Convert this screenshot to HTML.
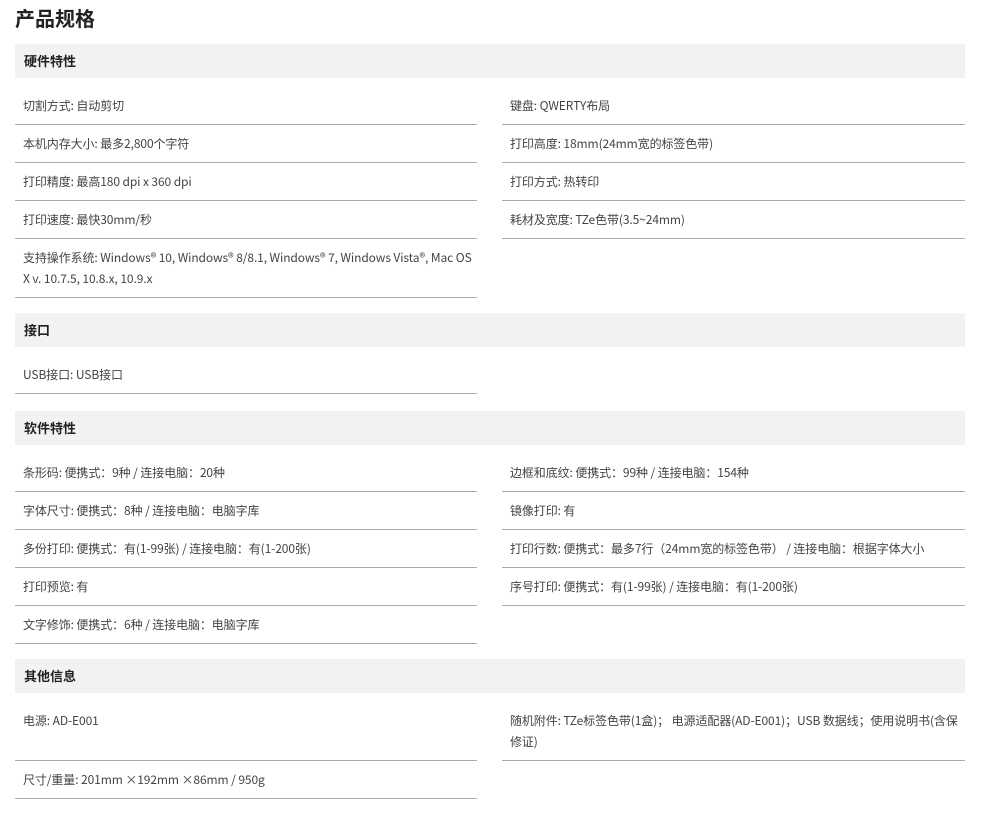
<!DOCTYPE html>
<html><head><meta charset="utf-8"><style>
*{margin:0;padding:0;box-sizing:border-box}
body{width:990px;height:816px;background:#fff;font-family:"Noto Sans CJK SC","Liberation Sans",sans-serif;color:#333;overflow:hidden}
h1{position:absolute;left:15px;top:3px;font-size:20px;font-weight:bold;color:#222;line-height:30px}
.sec{position:absolute;left:15px;width:950px}
.hd{height:34px;background:#f2f2f2;font-size:13px;font-weight:bold;line-height:34px;padding-left:9px;color:#222}
.grid{display:grid;grid-template-columns:462px 463px;column-gap:25px;margin-top:9px}
.c{font-size:12px;line-height:21px;padding:8px 0 8px 8px;border-bottom:1px solid #aaa;color:#444;letter-spacing:-0.1px}
.e{border-bottom:none}
</style></head><body>
<h1>产品规格</h1>
<div class="sec" style="top:44px">
<div class="hd">硬件特性</div>
<div class="grid">
<div class="c">切割方式: 自动剪切</div><div class="c">键盘: QWERTY布局</div>
<div class="c">本机内存大小: 最多2,800个字符</div><div class="c">打印高度: 18mm(24mm宽的标签色带)</div>
<div class="c">打印精度: 最高180 dpi x 360 dpi</div><div class="c">打印方式: 热转印</div>
<div class="c">打印速度: 最快30mm/秒</div><div class="c">耗材及宽度: TZe色带(3.5~24mm)</div>
<div class="c">支持操作系统: Windows® 10, Windows® 8/8.1, Windows® 7, Windows Vista®, Mac OS X v. 10.7.5, 10.8.x, 10.9.x</div><div class="c e"></div>
</div></div>
<div class="sec" style="top:313px">
<div class="hd">接口</div>
<div class="grid"><div class="c">USB接口: USB接口</div><div class="c e"></div></div>
</div>
<div class="sec" style="top:411px">
<div class="hd">软件特性</div>
<div class="grid">
<div class="c">条形码: 便携式：9种 / 连接电脑：20种</div><div class="c">边框和底纹: 便携式：99种 / 连接电脑：154种</div>
<div class="c">字体尺寸: 便携式：8种 / 连接电脑：电脑字库</div><div class="c">镜像打印: 有</div>
<div class="c">多份打印: 便携式：有(1-99张) / 连接电脑：有(1-200张)</div><div class="c">打印行数: 便携式：最多7行（24mm宽的标签色带） / 连接电脑：根据字体大小</div>
<div class="c">打印预览: 有</div><div class="c">序号打印: 便携式：有(1-99张) / 连接电脑：有(1-200张)</div>
<div class="c">文字修饰: 便携式：6种 / 连接电脑：电脑字库</div><div class="c e"></div>
</div></div>
<div class="sec" style="top:659px">
<div class="hd">其他信息</div>
<div class="grid">
<div class="c">电源: AD-E001</div><div class="c">随机附件: TZe标签色带(1盒)； 电源适配器(AD-E001)；USB 数据线；使用说明书(含保修证)</div>
<div class="c">尺寸/重量: 201mm ×192mm ×86mm / 950g</div><div class="c e"></div>
</div></div>
</body></html>
